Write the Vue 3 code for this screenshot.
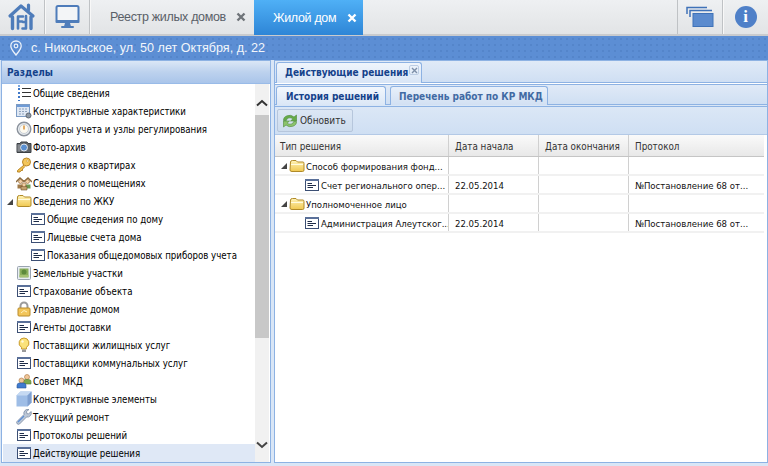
<script setup>
const tree = [
  { t: 'Общие сведения', i: 'list' },
  { t: 'Конструктивные характеристики', i: 'calc' },
  { t: 'Приборы учета и узлы регулирования', i: 'gauge' },
  { t: 'Фото-архив', i: 'camera' },
  { t: 'Сведения о квартирах', i: 'key' },
  { t: 'Сведения о помещениях', i: 'rooms' },
  { t: 'Сведения по ЖКУ', i: 'folder', open: true },
  { t: 'Общие сведения по дому', i: 'doc', child: true },
  { t: 'Лицевые счета дома', i: 'doc', child: true },
  { t: 'Показания общедомовых приборов учета', i: 'doc', child: true },
  { t: 'Земельные участки', i: 'land' },
  { t: 'Страхование объекта', i: 'doc' },
  { t: 'Управление домом', i: 'lock' },
  { t: 'Агенты доставки', i: 'doc' },
  { t: 'Поставщики жилищных услуг', i: 'bulb' },
  { t: 'Поставщики коммунальных услуг', i: 'doc' },
  { t: 'Совет МКД', i: 'people' },
  { t: 'Конструктивные элементы', i: 'cube' },
  { t: 'Текущий ремонт', i: 'wrench' },
  { t: 'Протоколы решений', i: 'doc' },
  { t: 'Действующие решения', i: 'doc', selected: true }
]
const rows = [
  { t: 'Способ формирования фонд...', folder: true, s: '', p: '' },
  { t: 'Счет регионального опер...', s: '22.05.2014', p: '№Постановление 68 от...' },
  { t: 'Уполномоченное лицо', folder: true, s: '', p: '' },
  { t: 'Администрация Алеутског...', s: '22.05.2014', p: '№Постановление 68 от...' }
]
</script>

<template>
  <div class="app">
    <svg class="defs" width="0" height="0" aria-hidden="true">
      <defs>
        <linearGradient id="fold" x1="0" y1="0" x2="0" y2="1"><stop offset="0" stop-color="#fff3b8"/><stop offset="1" stop-color="#f0c850"/></linearGradient>
        <symbol id="i-folder" viewBox="0 0 16 16">
          <path d="M1.500 4 Q1.500 2.500 3.500 2.500 H7 L8.500 4 H14 Q15 4 15 5.500 V12 Q15 13.500 13.500 13.500 H3 Q1 13.500 1 12 Z" fill="url(#fold)" stroke="#b08a28"/>
          <path d="M2 6.500 H14" stroke="#fffbe0" fill="none"/>
        </symbol>
        <symbol id="i-doc" viewBox="0 0 16 16">
          <rect x="1.500" y="2.500" width="13" height="11" fill="#fff" stroke="#3c4f74"/>
          <rect x="1" y="2" width="14" height="2" fill="#5a7099"/>
          <path d="M3.500 6.500H8M3.500 8.500H12M3.500 10.500H9" stroke="#1e2c48" fill="none"/>
        </symbol>
        <symbol id="i-list" viewBox="0 0 16 16">
          <path d="M6 3.500H15M6 7.500H15M6 11.500H15" stroke="#333" fill="none"/>
          <rect x="2" y="0" width="2" height="2" fill="#7aa6e0"/><rect x="2" y="3" width="2" height="2" fill="#3f78c8"/>
          <rect x="2" y="7" width="2" height="2" fill="#3f78c8"/><rect x="2" y="11" width="2" height="2" fill="#3f78c8"/><rect x="2" y="15" width="2" height="1" fill="#3f78c8"/>
        </symbol>
        <symbol id="i-calc" viewBox="0 0 16 16">
          <rect x="0.500" y="1.500" width="13" height="12" fill="#dfe8f4" stroke="#7d9cc4"/>
          <rect x="1" y="2" width="12" height="2" fill="#6f9bd6"/>
          <path d="M3 6H11M3 8.500H11M3 11H9" stroke="#8fa3bd" stroke-dasharray="2 1" fill="none"/>
          <circle cx="12.500" cy="12.500" r="2.500" fill="#8d97a3" stroke="#5f6873"/>
        </symbol>
        <symbol id="i-gauge" viewBox="0 0 16 16">
          <circle cx="8" cy="8" r="6.800" fill="#e8ecef" stroke="#8b929c" stroke-width="1.400"/>
          <circle cx="8" cy="8" r="4.500" fill="#fdfaf0" stroke="#c7cdd5"/>
          <path d="M8 4.500V8.500" stroke="#d8923a" stroke-width="1.500" fill="none"/>
        </symbol>
        <symbol id="i-camera" viewBox="0 0 16 16">
          <path d="M1 4.500H4L5 3H11L12 4.500H15V13.500H1Z" fill="#5f6468" stroke="#3b3f44"/>
          <circle cx="8" cy="8.500" r="3.500" fill="#5a8fd0" stroke="#dfe4ea"/>
          <rect x="1.500" y="5.500" width="2.500" height="7" fill="#85898e"/>
        </symbol>
        <symbol id="i-key" viewBox="0 0 16 16">
          <circle cx="10.500" cy="5" r="4" fill="#f4c659" stroke="#b9862a"/>
          <circle cx="11.500" cy="4" r="1" fill="#fff6d2" stroke="#b9862a" stroke-width=".5"/>
          <path d="M8 8L1.500 13.500V15H4L5 13.500H6.500V12L9 9.500" fill="#f2c14e" stroke="#b9862a"/>
        </symbol>
        <symbol id="i-rooms" viewBox="0 0 16 16">
          <path d="M0 7L4 3L8 6.500L12 3L16 7" fill="none" stroke="#8b6a3c" stroke-width="1.500"/>
          <circle cx="4.500" cy="6.500" r="2" fill="#f1cfa5" stroke="#8b5f30" stroke-width=".6"/>
          <circle cx="11.500" cy="6.500" r="2" fill="#f1cfa5" stroke="#8b5f30" stroke-width=".6"/>
          <path d="M1.500 13.500V9.500H7V13.500Z" fill="#a07a48"/><path d="M9 13.500V9.500H14.500V13.500Z" fill="#6d9a52"/>
          <path d="M5 15V11.500H11V15Z" fill="#c2a170" stroke="#6e532c" stroke-width=".6"/><circle cx="8" cy="9.800" r="2" fill="#f1cfa5" stroke="#8b5f30" stroke-width=".6"/>
        </symbol>
        <symbol id="i-land" viewBox="0 0 16 16">
          <rect x="1.500" y="1.500" width="13" height="13" rx="1" fill="#e8edf3" stroke="#9aa4b0"/>
          <rect x="3.500" y="3.500" width="9" height="9" fill="#8aae5c"/>
          <circle cx="8" cy="7" r="2.500" fill="#5d8a3c"/>
          <path d="M3.500 11H12.500" stroke="#a5c272" stroke-width="2"/>
        </symbol>
        <symbol id="i-lock" viewBox="0 0 16 16">
          <path d="M4.500 7V5A3.500 3.500 0 0 1 11.500 5V7" fill="none" stroke="#9b9b9b" stroke-width="2"/>
          <rect x="2" y="7" width="12" height="8" rx="1" fill="#f2c55a" stroke="#b88a2a"/>
          <path d="M5 12L8 9.500L11 11" stroke="#fff2c0" fill="none"/>
        </symbol>
        <symbol id="i-bulb" viewBox="0 0 16 16">
          <path d="M8 1A5 5 0 0 0 5.500 10.300V12H10.500V10.300A5 5 0 0 0 8 1Z" fill="#fbe27a" stroke="#c99b2c"/>
          <rect x="6" y="12.500" width="4" height="2.500" fill="#9a9a9a"/>
          <circle cx="6.500" cy="4.500" r="1.200" fill="#fffbe0"/>
        </symbol>
        <symbol id="i-people" viewBox="0 0 16 16">
          <circle cx="11" cy="4" r="2.500" fill="#f0c79a" stroke="#a8703a" stroke-width=".6"/>
          <path d="M7.500 11V8.500Q7.500 6.500 9.500 6.500H12.500Q15 6.500 15 8.500V11Z" fill="#7ba84c" stroke="#557a30" stroke-width=".6"/>
          <circle cx="5.500" cy="7.500" r="2.500" fill="#f0c79a" stroke="#a8703a" stroke-width=".6"/>
          <path d="M1 15V12.500Q1 10 3.500 10H7.500Q10 10 10 12.500V15Z" fill="#3f7bd0" stroke="#2a5596" stroke-width=".6"/>
        </symbol>
        <symbol id="i-cube" viewBox="0 0 16 16">
          <path d="M0.500 4.500L4.500 0.500H15.500V11.500L11.500 15.500H0.500Z" fill="#9ebde6"/>
          <path d="M0.500 4.500H11.500L15.500 0.500H4.500Z" fill="#c5d9f2"/>
          <path d="M11.500 4.500V15.500L15.500 11.500V0.500Z" fill="#7e9fd0"/>
        </symbol>
        <symbol id="i-wrench" viewBox="0 0 16 16">
          <path d="M15 2.500L12.500 5L10.800 4.500L10.500 2.500L13 0.500A4 4 0 0 0 8 5.500L1 12.500A1.800 1.800 0 0 0 3.500 15L10.500 8A4 4 0 0 0 15 2.500Z" fill="#bcc7d6" stroke="#7a8aa3" stroke-width=".8"/>
          <path d="M2 13L8 7" stroke="#5c8fd6" stroke-width="1.300"/>
        </symbol>
      </defs>
    </svg>

    <header class="topbar">
      <div class="topbtn home">
        <svg width="30" height="28" viewBox="0 0 30 28">
          <g fill="none" stroke="#4e7cba" stroke-linecap="round" stroke-linejoin="round">
            <path d="M3 13L14 3L26 13" stroke-width="3.200"/>
            <path d="M21.500 2V7" stroke-width="3.200"/>
            <path d="M5.500 14V25.500M24 14V25.500" stroke-width="3.400"/>
            <path d="M11 25.500V13.500H16M11 18.500H15" stroke-width="2.600"/>
            <path d="M19 13V25.500H15.500M19 19H16" stroke-width="2.600"/>
          </g>
        </svg>
      </div>
      <div class="topbtn monitor">
        <svg width="25" height="24" viewBox="0 0 25 24">
          <rect x="1.500" y="1" width="22" height="15" rx="1.500" fill="#f3f5f7" stroke="#4e7cba" stroke-width="2"/>
          <rect x="0.500" y="15" width="24" height="3" rx="1" fill="#4e7cba"/>
          <path d="M10 18H15L16 21.500H9Z" fill="#4e7cba"/><rect x="6" y="21" width="13" height="2" rx="1" fill="#4e7cba"/>
        </svg>
      </div>
      <div class="apptab">
        <span class="tt">Реестр жилых домов</span>
        <svg class="x" width="10" height="10" viewBox="0 0 10 10"><path d="M1.500 1.500L8.500 8.500M8.500 1.500L1.500 8.500" stroke="#6f7479" stroke-width="2.400"/></svg>
      </div>
      <div class="apptab active">
        <span class="tt">Жилой дом</span>
        <svg class="x" width="10" height="10" viewBox="0 0 10 10"><path d="M1.500 1.500L8.500 8.500M8.500 1.500L1.500 8.500" stroke="#fff" stroke-width="2.400"/></svg>
      </div>
      <div class="spacer"></div>
      <div class="topbtn wins">
        <svg width="28" height="22" viewBox="0 0 28 22">
          <path d="M1 8V1.500H21" fill="none" stroke="#3f72b8" stroke-width="1.500"/>
          <path d="M4 11V4.500H26" fill="none" stroke="#3f72b8" stroke-width="1.500"/>
          <rect x="7" y="7.500" width="20" height="13" fill="#5b8bce" stroke="#3f72b8"/>
        </svg>
      </div>
      <div class="topbtn info">
        <span class="infoicon">i</span>
      </div>
    </header>

    <div class="address">
      <svg width="14" height="16" viewBox="0 0 14 16"><path d="M7 1C3.800 1 1.800 3.300 1.800 6C1.800 9.200 5.300 12.800 7 15C8.700 12.800 12.200 9.200 12.200 6C12.200 3.300 10.200 1 7 1Z" fill="none" stroke="#eaf1fa" stroke-width="1.300"/><circle cx="7" cy="6" r="1.800" fill="none" stroke="#eaf1fa" stroke-width="1.200"/></svg>
      <span>с. Никольское, ул. 50 лет Октября, д. 22</span>
    </div>

    <main class="content">
      <aside class="left">
        <div class="lefthead">Разделы</div>
        <div class="leftbody">
          <ul class="tree">
            <li v-for="n in tree" :key="n.t" class="node" :class="{ child: n.child, selected: n.selected }">
              <i v-if="n.open" class="arrow"></i>
              <svg class="ico" width="16" height="16"><use :href="'#i-' + n.i" /></svg>
              <span class="lbl">{{ n.t }}</span>
            </li>
          </ul>
          <div class="sbar">
            <div class="sbtn up"><svg width="12" height="8" viewBox="0 0 12 8"><path d="M1 6.500L6 2L11 6.500" fill="none" stroke="#333" stroke-width="2"/></svg></div>
            <div class="thumb"></div>
            <div class="sbtn down"><svg width="12" height="8" viewBox="0 0 12 8"><path d="M1 1.500L6 6L11 1.500" fill="none" stroke="#444" stroke-width="2"/></svg></div>
          </div>
        </div>
      </aside>

      <section class="right">
        <div class="strip outer">
          <div class="tab">
            <span>Действующие решения</span>
            <span class="tclose"><svg width="7" height="7" viewBox="0 0 7 7"><path d="M1 1L6 6M6 1L1 6" stroke="#7d8fa8" stroke-width="1.400"/></svg></span>
          </div>
        </div>
        <div class="inner">
          <div class="strip second">
            <div class="tab on">История решений</div>
            <div class="tab off">Перечень работ по КР МКД</div>
          </div>
          <div class="toolbar">
            <div class="tbtn">
              <svg width="16" height="16" viewBox="0 0 16 16">
                <path d="M1.500 7.500A6 5 0 0 1 12 4L14.500 2V8H8.500L10.800 6A3.600 3 0 0 0 4.300 7.500Z" fill="#66ab4a" stroke="#4f8a3a" stroke-width=".6"/>
                <path d="M14.500 8.500A6 5 0 0 1 4 12L1.500 14V8H7.500L5.200 10A3.600 3 0 0 0 11.700 8.500Z" fill="#8bc36c" stroke="#4f8a3a" stroke-width=".6"/>
              </svg>
              <span>Обновить</span>
            </div>
          </div>
          <div class="grid">
            <div class="g-row g-head">
              <div class="c c1">Тип решения</div>
              <div class="c c2">Дата начала</div>
              <div class="c c3">Дата окончания</div>
              <div class="c c4">Протокол</div>
            </div>
            <div v-for="r in rows" :key="r.t" class="g-row">
              <div class="c c1" :class="r.folder ? 'lv0' : 'lv1'">
                <i v-if="r.folder" class="arrow"></i>
                <svg class="ico" width="16" height="16"><use :href="r.folder ? '#i-folder' : '#i-doc'" /></svg>
                <span>{{ r.t }}</span>
              </div>
              <div class="c c2">{{ r.s }}</div>
              <div class="c c3"></div>
              <div class="c c4">{{ r.p }}</div>
            </div>
          </div>
        </div>
      </section>
    </main>
  </div>
</template>

<style>
html, body { margin: 0; background: #fff; }
</style>

<style scoped>
.app { width: 768px; height: 466px; overflow: hidden; display: flex; flex-direction: column; font-family: "DejaVu Sans Condensed", "DejaVu Sans", sans-serif; font-stretch: condensed; font-size: 10px; color: #000; position: relative; }
.defs { position: absolute; }
.topbar { height: 36px; flex: none; box-sizing: border-box; display: flex; background: linear-gradient(#eef0f2, #e2e4e6); border-bottom: 2px solid #c9cbce; font-family: "Liberation Sans", Arial, sans-serif; font-stretch: normal; }
.topbtn { display: flex; align-items: center; justify-content: center; border-right: 1px solid #bfc2c5; box-shadow: 1px 0 0 #f8f8f8; flex: none; box-sizing: border-box; }
.home { width: 45px; }
.monitor { width: 45px; }
.apptab { display: flex; align-items: center; gap: 10px; font-size: 12.500px; letter-spacing: -0.330px; white-space: nowrap; color: #5a6068; width: 164px; flex: none; box-sizing: border-box; padding-left: 20px; }
.apptab.active { width: 109px; padding-left: 19px; gap: 11px; background: linear-gradient(#4fb0f6, #2e85d6); color: #fff; height: 35px; }
.spacer { flex: 1; }
.wins { width: 46px; border-left: 1px solid #bfc2c5; border-right: 1px solid #bfc2c5; }
.info { width: 45px; border-right: 0; box-shadow: none; }
.infoicon { width: 22px; height: 22px; border-radius: 50%; background: #4f80c8; color: #fff; font: bold 17px/22px "Liberation Serif", serif; text-align: center; display: block; }
.address { height: 24px; flex: none; display: flex; align-items: center; gap: 8px; padding-left: 9px; box-sizing: border-box; background-color: #5c8ed4; background-image: radial-gradient(circle, #5485ca 1px, transparent 1.100px); background-size: 6px 6px; color: #f2f6fb; font-family: "Liberation Sans", Arial, sans-serif; font-stretch: normal; font-size: 12.600px; }
.content { flex: 1; min-height: 0; display: flex; gap: 3px; background: #d9e6f6; padding: 0 0 3px; box-sizing: border-box; }
.left { width: 270px; flex: none; display: flex; flex-direction: column; border: 1px solid #8db2e3; box-sizing: border-box; margin-left: 1px; }
.lefthead { height: 23px; flex: none; background: linear-gradient(#dbe7f6, #bdd2ee 50%, #aac5ea); border-bottom: 1px solid #99bbe8; color: #15428b; font-weight: bold; display: flex; align-items: center; padding: 1px 0 0 5px; box-sizing: border-box; }
.leftbody { flex: 1; min-height: 0; display: flex; background: #fff; }
.tree { flex: 1; list-style: none; margin: 0; padding: 0 0 0 1px; min-width: 0; font-size: 9.600px; }
.node { height: 18px; display: flex; align-items: center; padding-left: 13px; white-space: nowrap; position: relative; color: #000; }
.node .ico { flex: none; margin-right: 1px; }
.node.child { padding-left: 27px; }
.node.selected { background: #dfe8f6; }
.node .lbl { line-height: 18px; padding-top: 1px; }
.arrow { display: block; width: 0; height: 0; border-style: solid; border-width: 0 0 6px 6px; border-color: transparent transparent #444 transparent; }
.node .arrow { position: absolute; left: 4px; top: 7px; }
.sbar { width: 14px; flex: none; display: flex; flex-direction: column; background: #f1f1f1; margin-right: 1px; }
.sbtn { display: flex; align-items: center; justify-content: center; }
.sbtn.up { height: 31px; padding-top: 7px; box-sizing: border-box; }
.thumb { height: 223px; background: #c8c8c8; flex: none; }
.sbtn.down { flex: 1; align-items: flex-end; padding-bottom: 13px; }
.right { flex: 1; min-width: 0; display: flex; flex-direction: column; border: 1px solid #8db2e3; box-sizing: border-box; background: #fff; }
.strip { flex: none; display: flex; align-items: flex-end; background: linear-gradient(#e0eaf7, #cfdff3); border-bottom: 1px solid #8db2e3; box-sizing: border-box; padding-left: 1px; position: relative; }
.outer { height: 22px; }
.tab { display: flex; align-items: center; box-sizing: border-box; border: 1px solid #8db2e3; border-bottom: 0; border-radius: 3px 3px 0 0; color: #15428b; font-weight: bold; margin-bottom: -1px; position: relative; }
.outer .tab { width: 146px; height: 21px; padding-left: 8px; padding-bottom: 1px; background: linear-gradient(#eff5fc, #d8e5f6); }
.tclose { width: 10px; height: 10px; position: absolute; right: 2px; top: 2px; border: 1px solid #bccde4; border-radius: 2px; display: flex; align-items: center; justify-content: center; box-sizing: border-box; }
.inner { flex: 1; min-height: 0; display: flex; flex-direction: column; background: #d9e6f6; margin-top: 1px; }
.second { height: 21px; gap: 4px; border-top: 1px solid #8db2e3; }
.second .tab { height: 19px; }
.second .tab.on { width: 110px; padding-left: 9px; background: linear-gradient(#f2f7fd, #dbe7f6); }
.second .tab.off { width: 158px; padding-left: 8px; color: #416aa3; background: linear-gradient(#e8f0fa, #d2e0f3); }
.toolbar { height: 29px; flex: none; box-sizing: border-box; background: linear-gradient(#dbe7f6, #cfdff3); border-top: 1px solid #8db2e3; border-bottom: 1px solid #b3c9e6; padding: 2px 0 0 2px; margin-top: 1px; }
.tbtn { width: 76px; height: 23px; box-sizing: border-box; border: 1px solid #b6c6dc; border-radius: 2px; display: flex; align-items: center; padding-left: 4px; gap: 2px; color: #333; background: linear-gradient(#dce7f5, #cddcee); }
.grid { flex: 1; padding-right: 3px; background: #fff; font-size: 9.500px; }
.g-row { display: flex; height: 19px; box-sizing: border-box; border-bottom: 2px solid #f1f1f1; }
.g-head { height: 22px; background: linear-gradient(#fafafa, #e8e8e8); border-bottom: 1px solid #c5c5c5; color: #333; font-size: 9.800px; }
.c { box-sizing: border-box; display: flex; align-items: center; padding: 2px 0 0 6px; border-right: 1px solid #d0d0d0; white-space: nowrap; overflow: hidden; flex: none; color: #111; }
.g-head .c { color: #333; padding-top: 1px; }
.c1 { width: 174px; padding-left: 5px; }
.c2 { width: 90px; }
.c3 { width: 90px; }
.c4 { width: 135px; border-right: 0; }
.c.lv0 { padding-left: 6px; }
.c.lv0 .arrow { margin-right: 2px; margin-top: -2px; }
.c.lv1 { padding-left: 29px; }
.c .ico { margin-right: 1px; margin-top: -2px; flex: none; }
</style>
